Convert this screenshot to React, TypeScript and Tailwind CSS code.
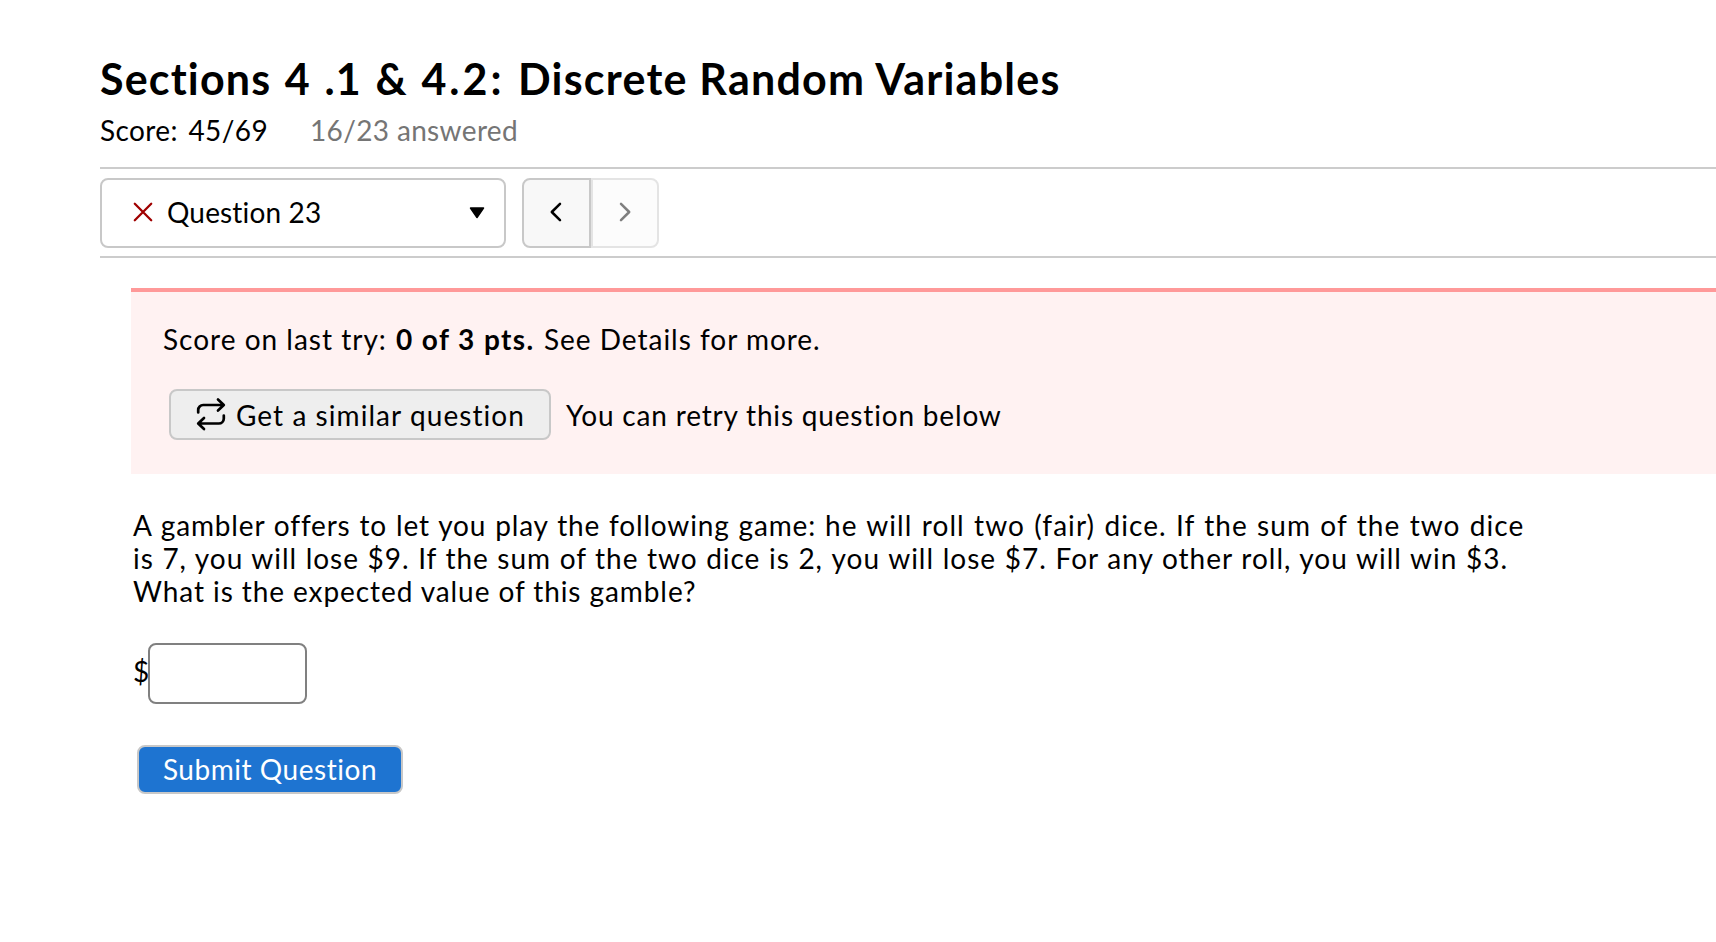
function CrossIcon() {
  return (
    <svg className="mb-0.5 ml-[30px] size-[22px] shrink-0" viewBox="0 0 22 22" fill="none" stroke="#a00000" strokeWidth="2.3" strokeLinecap="round">
      <path d="M2.800 2.800 19.200 19.200M19.200 2.800 2.800 19.200" />
    </svg>
  );
}

function RepeatIcon() {
  return (
    <svg className="mb-px h-[34px] w-[30px] shrink-0" viewBox="0 0 30 34" fill="none" stroke="#000" strokeWidth="2.7" strokeLinecap="round" strokeLinejoin="round">
      <path d="M2.200 15.500v-2.500a5 5 0 0 1 5-5H27.500M22 2.500 27.800 8 22 13.500" />
      <path d="M27.800 18.500v3a5 5 0 0 1-5 5H2.500M8 21 2.200 26.500 8 32" />
    </svg>
  );
}

function ChevronIcon({ d }: { d: string }) {
  return (
    <svg className="h-[22px] w-[14px]" viewBox="0 0 14 22" fill="none" stroke="currentColor" strokeWidth="2.5" strokeLinecap="round" strokeLinejoin="round">
      <path d={d} />
    </svg>
  );
}

function Header() {
  return (
    <header className="pb-[19px]">
      <h1 className="text-[43px] font-bold leading-[52px] tracking-[1.23px]">
        <span className="tracking-[1.15px] [word-spacing:2px]">Sections 4 .1 &amp; </span>
        <span className="tracking-[3px]">4.2: </span>
        Discrete Random Variables
      </h1>
      <div className="mt-[7px] flex leading-9">
        <span className="w-[210px] tracking-[0.4px] [word-spacing:3px]">Score: 45/69</span>
        <span className="tracking-[0.35px] text-[#757575]">16/23 answered</span>
      </div>
    </header>
  );
}

function QuestionNav() {
  return (
    <nav className="flex border-y-2 border-[#cccccc] pt-[9px] pb-2">
      <button className="flex h-[70px] w-[406px] items-center rounded-[8px] border-2 border-[#c8c8c8] bg-white">
        <CrossIcon />
        <span className="ml-[13px] pb-0.5 tracking-[0.16px]">Question 23</span>
        <svg className="mr-[19px] ml-auto h-[12px] w-[16px]" viewBox="0 0 16 12">
          <path d="M1.500 1h13L8 10.500z" fill="#000" stroke="#000" strokeWidth="1.500" strokeLinejoin="round" />
        </svg>
      </button>
      <button className="ml-4 flex h-[70px] w-[69px] items-center justify-center rounded-l-[8px] border-2 border-[#c8c8c8] bg-[#f8f8f8] pr-0.5 pb-0.5">
        <ChevronIcon d="M11 2.800 2.800 11 11 19.200" />
      </button>
      <button className="flex h-[70px] w-[68px] items-center justify-center rounded-r-[8px] border-2 border-[#e4e4e4] bg-[#fcfcfc] pb-0.5 text-[#7f7f7f]" disabled>
        <ChevronIcon d="M3 2.800 11.200 11 3 19.200" />
      </button>
    </nav>
  );
}

function ScoreBanner() {
  return (
    <section className="mt-[30px] h-[186px] border-t-4 border-[#ff9999] bg-[#fff2f2] pt-[30px] pl-8">
      <p className="flex leading-[34px]">
        <span className="w-[233px] tracking-[1px]">Score on last try:</span>
        <b className="w-[148px] tracking-[1.4px]">0 of 3 pts.</b>
        <span className="tracking-[0.98px]">See Details for more.</span>
      </p>
      <div className="mt-[33px] flex items-center">
        <button className="ml-[6px] flex h-[51px] w-[382px] items-center rounded-[8px] border-2 border-[#c8c8c8] bg-[#eeeeee] pl-[25px]">
          <RepeatIcon />
          <span className="ml-[10px] whitespace-nowrap tracking-[1.06px]">Get a similar question</span>
        </button>
        <span className="ml-[15px] tracking-[0.82px]">You can retry this question below</span>
      </div>
    </section>
  );
}

function Question() {
  return (
    <main className="ml-0.5 pt-[35px]">
      <p className="whitespace-nowrap leading-[33px]">
        <span className="block">
          <span className="tracking-[0.83px] [word-spacing:1px]">A gambler offers to let you play the following game: </span>
          <span className="tracking-[1.06px] [word-spacing:1.1px]">he will roll two (fair) dice. If the sum of the two dice</span>
        </span>
        <span className="block">
          <span className="tracking-[0.96px] [word-spacing:0.5px]">is 7, you will lose $9. If the sum of the two dice is 2, </span>
          <span className="tracking-[1px] [word-spacing:0.5px]">you will lose $7. For any other roll, you will win $3.</span>
        </span>
        <span className="block tracking-[0.92px]">What is the expected value of this gamble?</span>
      </p>
      <div className="mt-[35px] flex items-center">
        <span className="w-[15px] pb-[5px]">$</span>
        <input className="h-[61px] w-[159px] rounded-[8px] border-2 border-[#808080] bg-white px-3 outline-none" />
      </div>
      <button className="mt-[41px] ml-1 flex h-[49px] w-[266px] items-center justify-center rounded-[8px] border-2 border-[#c8c8c8] bg-[#1e74d1] pb-0.5 tracking-[0.54px] text-white">
        Submit Question
      </button>
    </main>
  );
}

export default function App() {
  return (
    <div className="h-[942px] overflow-hidden bg-white pt-[53px] pl-[100px] font-['Lato',sans-serif] text-[28px] text-black">
      <Header />
      <QuestionNav />
      <div className="ml-[31px]">
        <ScoreBanner />
        <Question />
      </div>
    </div>
  );
}
